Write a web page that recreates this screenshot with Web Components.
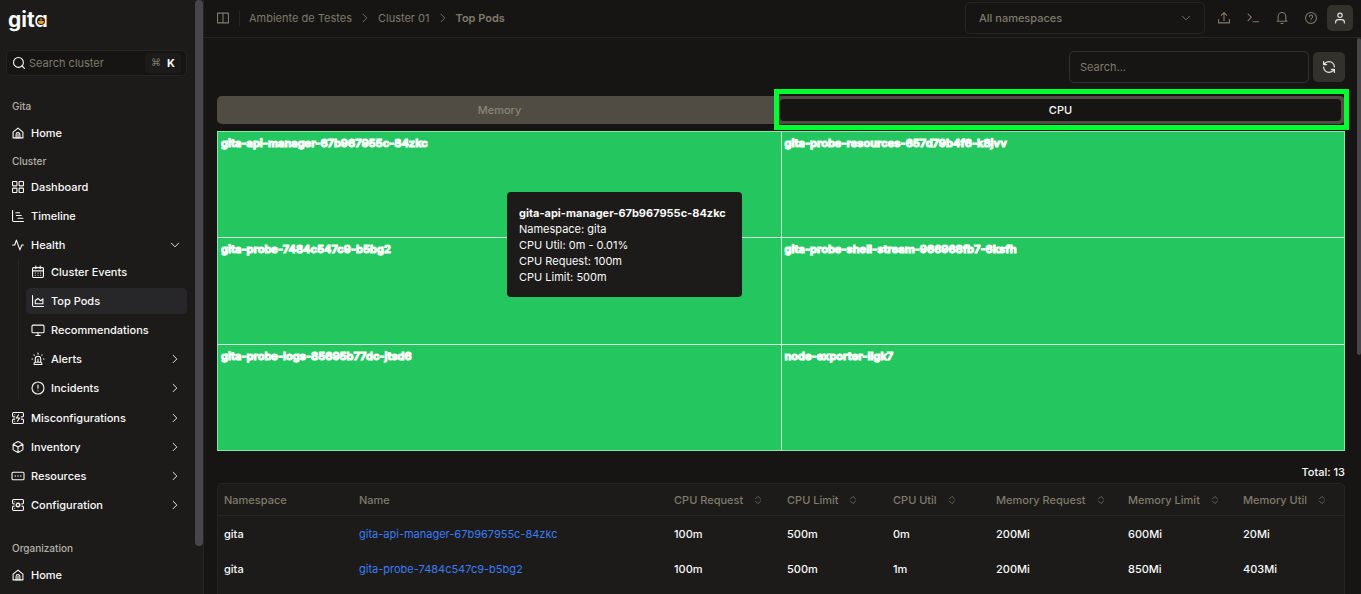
<!DOCTYPE html>
<html lang="en">
<head>
<meta charset="utf-8">
<meta name="viewport" content="width=device-width, initial-scale=1">
<title>Gita – Top Pods</title>
<style>
:root {
  --bg: #161513;
  --panel: #1c1b19;
  --line: #262522;
  --field-line: #33312d;
  --button: #33312c;
  --bar: #504c44;
  --muted: #7f7a6b;
  --text: #fafaf9;
  --thumb: #46464b;
  --link: #3b7cf6;
  --green: #24c660;
}
html, body { height: 100%; }
body {
  margin: 0;
  background: var(--bg);
  color: var(--text);
  font: 400 11px/16px Inter, "Liberation Sans", sans-serif;
  overflow: hidden;
}
</style>
</head>
<body>
<gita-app></gita-app>

<script>
const ICONS = {
  home: '<path d="M3 10.500 12 3l9 7.500V21H3z" stroke-linejoin="round"/><path d="M8.500 21v-6.500a3.500 3.500 0 0 1 7 0V21M12 14v7"/>',
  grid: '<rect x="2" y="2" width="8" height="8" rx="1"/><rect x="14" y="2" width="8" height="8" rx="1"/><rect x="14" y="14" width="8" height="8" rx="1"/><rect x="2" y="14" width="8" height="8" rx="1"/>',
  gantt: '<path d="M2 2v18a2 2 0 0 0 2 2h18M8 6h7M9 11h9M12 16h9"/>',
  activity: '<path d="M22 12h-3l-3.500 9L9 3l-3 9H2"/>',
  calendar: '<path d="M8 1v5M16 1v5M2 10h20"/><rect x="2" y="4" width="20" height="18" rx="2"/><path d="M7 14h.01M12 14h.01M17 14h.01M7 18h.01M12 18h.01M17 18h.01"/>',
  area: '<path d="M2 2v18a2 2 0 0 0 2 2h18"/><path d="M7 11v6h14V8l-4 3.500-5-4z"/>',
  monitor: '<rect x="1" y="3" width="22" height="14" rx="2"/><path d="M8 22h8M12 17v5"/>',
  siren: '<path d="M7 18v-6a5 5 0 0 1 10 0v6M5 22v-2a2 2 0 0 1 2-2h10a2 2 0 0 1 2 2v2zM22 12h1M19.500 4.500 19 5M1 12h1M12 1v2M4.500 4.500l.7.7M12 12v6"/>',
  alert: '<circle cx="12" cy="12" r="11"/><path d="M12 6.500v6M12 17h.01"/>',
  crash: '<path d="M6 10H4a2 2 0 0 1-2-2V4a2 2 0 0 1 2-2h16a2 2 0 0 1 2 2v4a2 2 0 0 1-2 2h-2M6 14H4a2 2 0 0 0-2 2v4a2 2 0 0 0 2 2h16a2 2 0 0 0 2-2v-4a2 2 0 0 0-2-2h-2M6 6h.01M6 18h.01M13 6l-4 6h6l-4 6"/>',
  box: '<path d="M21 8a2 2 0 0 0-1-1.700l-7-4a2 2 0 0 0-2 0l-7 4A2 2 0 0 0 3 8v8a2 2 0 0 0 1 1.700l7 4a2 2 0 0 0 2 0l7-4a2 2 0 0 0 1-1.700ZM3.300 7l8.700 5 8.700-5M12 22V12"/>',
  ellipsis: '<rect x="1" y="5" width="22" height="14" rx="2"/><path d="M7 12h.01M12 12h.01M17 12h.01" stroke-width="2.500"/>',
  cog: '<path d="M5 10H4a2 2 0 0 1-2-2V4a2 2 0 0 1 2-2h16a2 2 0 0 1 2 2v4a2 2 0 0 1-2 2h-1M5 14H4a2 2 0 0 0-2 2v4a2 2 0 0 0 2 2h16a2 2 0 0 0 2-2v-4a2 2 0 0 0-2-2h-1M6 6h.01M6 18h.01"/><circle cx="12" cy="12" r="3"/><path d="M15.700 13.400l-.9-.3M9.200 10.900l-.9-.3M10.600 15.700l.3-.9M13.600 15.700l-.4-1M10.800 9.300l-.4-1M8.300 13.600l1-.4M14.700 10.800l1-.4M13.400 8.300l-.3.9"/>',
  right: '<path d="M8 4l8 8-8 8"/>',
  down: '<path d="M4 8l8 8 8-8"/>',
  search: '<circle cx="11" cy="11" r="9"/><path d="M22 22 17.500 17.500"/>',
  columns: '<path d="M2 3h20v18H2zM12 3v18"/>',
  upload: '<path d="M2 15v6h20v-6M12 17V2M7 7l5-5 5 5"/>',
  terminal: '<path d="M3 17l6-6-6-6M12 19h10"/>',
  bell: '<path d="M10 22h4M5 17V9a7 7 0 0 1 14 0v8l2 1H3z"/>',
  help: '<circle cx="12" cy="12" r="10"/><path d="M9 9.500a3 3 0 1 1 4.500 2.700c-1 .5-1.500 1-1.500 2M12 17.500h.01"/>',
  user: '<circle cx="12" cy="7" r="4"/><path d="M4 21v-1a5 5 0 0 1 5-5h6a5 5 0 0 1 5 5v1"/>',
  refresh: '<g transform="translate(-1.200 -1.200) scale(1.100)"><path d="M21 12a9 9 0 0 0-9-9 9.750 9.750 0 0 0-6.740 2.740L3 8M3 3v5h5M3 12a9 9 0 0 0 9 9 9.750 9.750 0 0 0 6.740-2.740L21 16M16 16h5v5"/></g>',
  sort: '<path d="M5 9l7-7 7 7M5 15l7 7 7-7"/>'
};

function define(name, css, html, init) {
  const tpl = document.createElement('template');
  tpl.innerHTML = `<style>*{box-sizing:border-box}${css}</style>${html}`;
  customElements.define(name, class extends HTMLElement {
    connectedCallback() {
      if (this.shadowRoot) return;
      const root = this.attachShadow({ mode: 'open' });
      root.append(tpl.content.cloneNode(true));
      if (init) init(this, root);
    }
  });
}

define('gita-icon', `
  :host { display: inline-flex; flex: none; width: 12px; height: 12px; }
  svg { width: 100%; height: 100%; fill: none; stroke: currentColor; stroke-width: 2; stroke-linecap: round; stroke-linejoin: round; overflow: visible; }
`, '<svg viewBox="1 1 22 22" aria-hidden="true"></svg>', (el, root) => {
  root.querySelector('svg').innerHTML = ICONS[el.getAttribute('name')] || '';
});

define('gita-logo', `
  :host { display: block; position: relative; width: 42px; font-weight: 700; font-size: 21px; line-height: 24px; font-feature-settings: "cv11"; }
  svg { position: absolute; left: 29px; top: 9px; width: 8px; height: 8px; }
`, `gita<svg viewBox="0 0 8 8" aria-hidden="true"><circle cx="4" cy="4" r="4" fill="#2b2115"/><path d="M1 4h6a3 3 0 0 1-6 0z" fill="#e8a21c"/><circle cx="4" cy="2.400" r="1.200" fill="#b9782a"/></svg>`);

define('nav-item', `
  :host { display: block; }
  a, button { display: flex; align-items: center; gap: 7px; width: 100%; height: 26px; padding: 0 6px; border: 0; border-radius: 5px; background: none; color: inherit; font: 500 11px/16px Inter, sans-serif; text-align: left; text-decoration: none; cursor: pointer; }
  .label { flex: 1; }
  .chev { width: 10px; height: 10px; margin-right: 1px; }
  :host([active]) a { background: #27272a; }
`, '<slot name="sub"></slot>', (el, root) => {
  const chevron = el.getAttribute('chevron');
  const item = document.createElement(chevron ? 'button' : 'a');
  if (chevron) { item.type = 'button'; item.setAttribute('aria-expanded', String(chevron === 'down')); }
  else item.href = '#';
  item.innerHTML = `<gita-icon name="${el.getAttribute('icon')}"></gita-icon><span class="label"><slot></slot></span>` +
    (chevron ? `<gita-icon class="chev" name="${chevron}"></gita-icon>` : '');
  root.prepend(item);
});

define('nav-group', `
  :host { display: flex; flex-direction: column; gap: 3px; }
  h2 { margin: 0 0 var(--heading-gap, 2px); padding: 0 6px; font: 500 10px/16px Inter, sans-serif; color: #b5b1a8; }
`, '<h2></h2><slot></slot>', (el, root) => {
  root.querySelector('h2').textContent = el.getAttribute('heading');
});

define('sub-nav', `
  :host { display: flex; flex-direction: column; gap: 3px; margin-left: 12px; margin-bottom: 1px; padding: 1px 0 0 7px; border-left: 1px solid var(--line); }
`, '<slot></slot>');

define('scroll-thumb', `
  :host { display: block; flex: none; }
  div { width: 100%; height: var(--length); border-radius: 4px; background: var(--thumb); }
`, '<div></div>');

define('side-bar', `
  :host { display: flex; flex: none; width: 204px; background: var(--panel); border-right: 1px solid var(--line); overflow: hidden; }
  .content { flex: 1; min-width: 0; padding: 8px 8px 0 6px; }
  gita-logo { margin: 0 0 18px 2px; }
  .search { display: flex; align-items: center; gap: 4px; height: 26px; margin-bottom: 22px; padding: 0 5px 0 6px; border: 1px solid var(--line); border-radius: 5px; background: var(--bg); }
  input { flex: 1; width: 0; min-width: 0; padding: 0; border: 0; outline: 0; background: none; color: inherit; font: inherit; }
  input::placeholder { color: var(--muted); opacity: 1; }
  kbd { display: flex; gap: 6px; padding: 2px 6px; border-radius: 4px; background: var(--panel); font: 700 11px/16px Inter, sans-serif; }
  kbd span { font: 10px/16px "DejaVu Sans", sans-serif; color: var(--muted); }
  .gita, .org { --heading-gap: 3px; }
  .gita { margin-bottom: 7px; }
  .org { margin-top: 22px; }
  scroll-thumb { width: 8px; --length: 92%; }
`, `
  <div class="content">
    <gita-logo></gita-logo>
    <label class="search"><gita-icon name="search"></gita-icon><input type="text" placeholder="Search cluster" aria-label="Search cluster"><kbd><span>⌘</span>K</kbd></label>
    <nav>
      <nav-group class="gita" heading="Gita"><nav-item icon="home">Home</nav-item></nav-group>
      <nav-group heading="Cluster">
        <nav-item icon="grid">Dashboard</nav-item>
        <nav-item icon="gantt">Timeline</nav-item>
        <nav-item icon="activity" chevron="down">Health
          <sub-nav slot="sub">
            <nav-item icon="calendar">Cluster Events</nav-item>
            <nav-item icon="area" active>Top Pods</nav-item>
            <nav-item icon="monitor">Recommendations</nav-item>
            <nav-item icon="siren" chevron="right">Alerts</nav-item>
            <nav-item icon="alert" chevron="right">Incidents</nav-item>
          </sub-nav>
        </nav-item>
        <nav-item icon="crash" chevron="right">Misconfigurations</nav-item>
        <nav-item icon="box" chevron="right">Inventory</nav-item>
        <nav-item icon="ellipsis" chevron="right">Resources</nav-item>
        <nav-item icon="cog" chevron="right">Configuration</nav-item>
      </nav-group>
      <nav-group class="org" heading="Organization"><nav-item icon="home">Home</nav-item></nav-group>
    </nav>
  </div>
  <scroll-thumb></scroll-thumb>
`);

define('icon-button', `
  :host { display: block; flex: none; width: 29px; height: 26px; color: var(--muted); }
  button { display: flex; align-items: center; justify-content: center; width: 100%; height: 100%; padding: 0; border: 0; border-radius: 5px; background: none; color: inherit; cursor: pointer; }
  :host([filled]) { color: #e7e5e4; }
  :host([filled]) button { background: var(--button); }
`, '<button type="button"></button>', (el, root) => {
  const button = root.querySelector('button');
  button.setAttribute('aria-label', el.getAttribute('label'));
  button.innerHTML = `<gita-icon name="${el.getAttribute('icon')}"></gita-icon>`;
});

define('top-bar', `
  :host { display: flex; align-items: center; height: 38px; padding: 0 8px 2px 13px; border-bottom: 1px solid var(--line); color: var(--muted); }
  .toggle { display: flex; padding: 0; border: 0; background: none; color: inherit; }
  .rule { width: 1px; height: 16px; margin: 0 9px 0 10px; background: var(--line); }
  ol { display: flex; align-items: center; flex: 1; margin: 0; padding: 0; list-style: none; }
  li { display: flex; align-items: center; }
  a { color: inherit; text-decoration: none; }
  li gita-icon { width: 10px; height: 10px; margin: 0 8px; }
  strong { font-weight: 600; }
  .select { display: grid; align-items: center; width: 240px; height: 32px; margin-right: 4px; }
  select, .select gita-icon { grid-area: 1 / 1; }
  select { width: 100%; height: 100%; padding: 0 13px; border: 1px solid var(--line); border-radius: 5px; background: none; color: inherit; font: 500 11px/16px Inter, sans-serif; appearance: none; }
  .select gita-icon { justify-self: end; width: 10px; height: 10px; margin-right: 14px; pointer-events: none; }
  .user { width: 26px; margin-left: 2px; }
`, `
  <button class="toggle" type="button" aria-label="Toggle sidebar"><gita-icon name="columns"></gita-icon></button>
  <span class="rule"></span>
  <ol>
    <li><a href="#">Ambiente de Testes</a><gita-icon name="right"></gita-icon></li>
    <li><a href="#">Cluster 01</a><gita-icon name="right"></gita-icon></li>
    <li><strong>Top Pods</strong></li>
  </ol>
  <label class="select"><select aria-label="Namespace"><option>All namespaces</option></select><gita-icon name="down"></gita-icon></label>
  <icon-button icon="upload" label="Upload"></icon-button>
  <icon-button icon="terminal" label="Terminal"></icon-button>
  <icon-button icon="bell" label="Notifications"></icon-button>
  <icon-button icon="help" label="Help"></icon-button>
  <icon-button class="user" icon="user" label="Account" filled></icon-button>
`);

define('pod-toolbar', `
  :host { display: flex; align-items: center; justify-content: flex-end; gap: 4px; }
  input { width: 240px; height: 32px; padding: 0 10px; border: 1px solid var(--field-line); border-radius: 5px; outline: 0; background: none; color: inherit; font: inherit; }
  input::placeholder { color: var(--muted); opacity: 1; }
  icon-button { width: 32px; height: 30px; }
`, `<input type="text" placeholder="Search..." aria-label="Search pods"><icon-button icon="refresh" label="Refresh" filled></icon-button>`);

define('metric-tabs', `
  :host { display: grid; grid-template-columns: 1fr 1fr; height: 28px; padding: 3px 4px 3px 2px; border-radius: 5px; background: var(--bar); }
  button { position: relative; padding: 0; border: 0; border-radius: 4px; background: none; color: #8a8577; font: 500 11px/16px Inter, sans-serif; }
  [aria-selected="true"] { background: var(--bg); color: var(--text); }
  [aria-selected="true"]::after { content: ""; position: absolute; z-index: 1; inset: -10px -8px -9px -6px; border: 5px solid #00ff2f; pointer-events: none; }
`, '<button type="button" role="tab" aria-selected="false">Memory</button><button type="button" role="tab" aria-selected="true">CPU</button>',
(el) => el.setAttribute('role', 'tablist'));

define('pod-cell', `
  :host { display: block; padding: 3px; background: var(--green); font-weight: 700; -webkit-text-stroke: 1px #fff; color: #fff; }
`, '<slot></slot>');

define('pod-tooltip', `
  :host { display: block; box-sizing: border-box; min-width: 235px; position: absolute; left: 289px; top: 60px; padding: 13px 12px 12px; border-radius: 4px; background: var(--panel); white-space: nowrap; }
  div { height: 16px; }
  strong { font-weight: 700; }
`, `<div><strong>gita-api-manager-67b967955c-84zkc</strong></div><div>Namespace: gita</div><div>CPU Util: 0m - 0.01%</div><div>CPU Request: 100m</div><div>CPU Limit: 500m</div>`,
(el) => el.setAttribute('role', 'tooltip'));

define('pod-treemap', `
  :host { position: relative; display: grid; grid-template-columns: 1fr 1fr; grid-template-rows: repeat(3, 1fr); gap: 1px; height: 320px; border: 1px solid #8fe3ad; background: #d3f5de; }
`, `
  <pod-cell>gita-api-manager-67b967955c-84zkc</pod-cell>
  <pod-cell>gita-probe-resources-657d79b4f6-k8jvv</pod-cell>
  <pod-cell>gita-probe-7484c547c9-b5bg2</pod-cell>
  <pod-cell>gita-probe-shell-stream-966968fb7-6ksfh</pod-cell>
  <pod-cell>gita-probe-logs-85695b77dc-jtsd6</pod-cell>
  <pod-cell>node-exporter-llgk7</pod-cell>
  <pod-tooltip></pod-tooltip>
`);

const COLUMNS = [
  ['Namespace', 135], ['Name', 315], ['CPU Request', 113], ['CPU Limit', 106],
  ['CPU Util', 103], ['Memory Request', 132], ['Memory Limit', 115], ['Memory Util', 107]
];
const ROWS = [
  ['gita', 'gita-api-manager-67b967955c-84zkc', '100m', '500m', '0m', '200Mi', '600Mi', '20Mi'],
  ['gita', 'gita-probe-7484c547c9-b5bg2', '100m', '500m', '1m', '200Mi', '850Mi', '403Mi']
];

define('pod-table', `
  :host { display: block; border: 1px solid var(--line); border-bottom: 0; border-radius: 5px 5px 0 0; background: var(--panel); }
  table { width: 100%; table-layout: fixed; border-collapse: separate; border-spacing: 0; font-weight: 500; }
  th, td { padding: 0 6px; text-align: left; white-space: nowrap; }
  th { height: 32px; border-bottom: 1px solid var(--line); color: var(--muted); font-weight: 500; }
  td { height: 35px; }
  a { color: var(--link); font-weight: 400; text-decoration: none; }
  button { display: inline-flex; align-items: center; gap: 11px; padding: 0; border: 0; background: none; color: inherit; font: inherit; }
  gita-icon { width: 8px; height: 8px; }
`, '<table><colgroup></colgroup><thead><tr></tr></thead><tbody></tbody></table>', (el, root) => {
  root.querySelector('colgroup').innerHTML = COLUMNS.map(([, w]) => `<col style="width:${w}px">`).join('');
  root.querySelector('thead tr').innerHTML = COLUMNS.map(([t], i) =>
    `<th scope="col">${i < 2 ? t : `<button type="button">${t}<gita-icon name="sort"></gita-icon></button>`}</th>`).join('');
  root.querySelector('tbody').innerHTML = ROWS.map(r =>
    `<tr>${r.map((v, i) => `<td>${i === 1 ? `<a href="#">${v}</a>` : v}</td>`).join('')}</tr>`).join('');
});

define('pods-page', `
  :host { display: flex; flex: 1; min-height: 0; }
  main { display: flex; flex-direction: column; flex: 1; min-width: 0; padding: 13px 12px 0 13px; }
  metric-tabs { margin: 13px 0 7px; }
  p { margin: 13px 0 3px; text-align: right; font-weight: 500; }
  pod-table { flex: 1; }
  scroll-thumb { width: 4px; --length: 57%; }
`, `
  <main>
    <pod-toolbar></pod-toolbar>
    <metric-tabs></metric-tabs>
    <pod-treemap></pod-treemap>
    <p>Total: 13</p>
    <pod-table></pod-table>
  </main>
  <scroll-thumb></scroll-thumb>
`);

define('gita-app', `
  :host { display: flex; height: 100vh; overflow: hidden; }
  .body { display: flex; flex-direction: column; flex: 1; min-width: 0; }
`, '<side-bar></side-bar><div class="body"><top-bar></top-bar><pods-page></pods-page></div>');
</script>
</body>
</html>
